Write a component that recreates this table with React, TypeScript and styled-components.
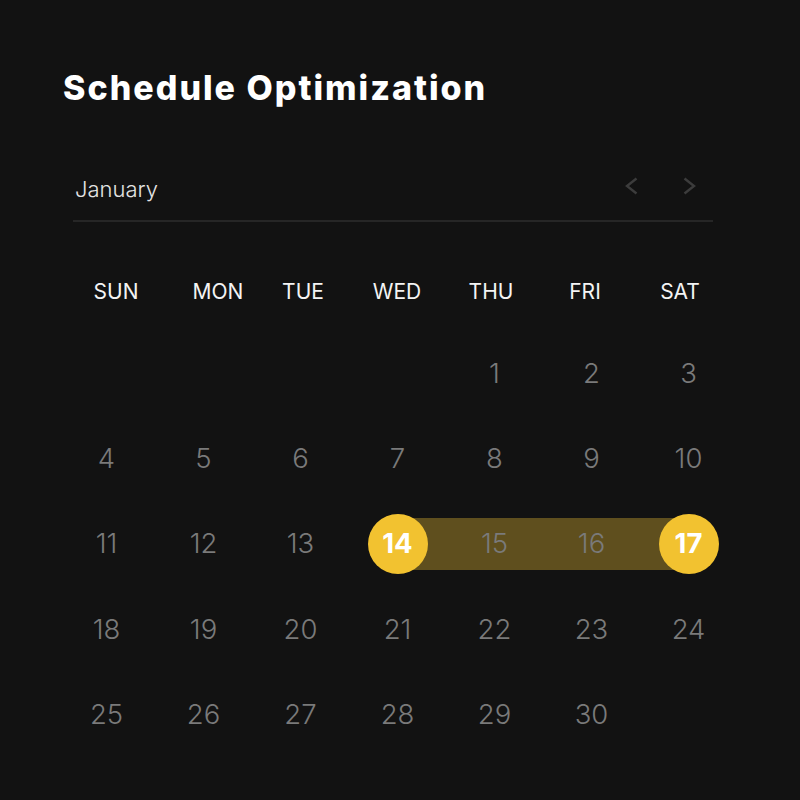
import React from "react";
import styled, { createGlobalStyle } from "styled-components";

const GlobalStyle = createGlobalStyle`
  html, body {
    margin: 0;
    padding: 0;
    background: #121212;
  }
  body {
    font-family: Inter, "Noto Sans", "Liberation Sans", sans-serif;
    width: 800px;
    height: 800px;
    overflow: hidden;
  }
`;

const YELLOW = "#f2c230";
const BAND = "#5f4f1e";

const Page = styled.main`
  width: 800px;
  height: 800px;
  box-sizing: border-box;
  background: #121212;
  padding: 70px 0 0 58px;
  display: flex;
  flex-direction: column;
`;

const Title = styled.h1`
  margin: 0 0 0 5px;
  font-size: 34px;
  line-height: 36px;
  font-weight: 800;
  color: #ffffff;
  letter-spacing: 2px;
`;

const MonthBar = styled.div`
  margin: 65px 0 0 15px;
  width: 640px;
  height: 51px;
  box-sizing: border-box;
  border-bottom: 2px solid #262626;
  display: flex;
  align-items: flex-start;
  justify-content: space-between;
  padding: 4px 17px 0 2px;
`;

const MonthName = styled.span`
  font-size: 22px;
  line-height: 28px;
  font-weight: 300;
  color: #e4e4e4;
`;

const NavGroup = styled.div`
  display: flex;
  gap: 45px;
  padding-top: 2px;
`;

const NavButton = styled.button`
  border: 0;
  background: transparent;
  padding: 0;
  width: 13px;
  height: 18px;
  display: flex;
  cursor: pointer;
  color: #3c3c3c;
`;

const WeekHeader = styled.div`
  margin: 56px 0 0 15px;
  display: grid;
  grid-template-columns: 86px 118px 52px 136px 52px 136px 54px;
`;

const WeekDay = styled.span`
  text-align: center;
  font-size: 21px;
  line-height: 28px;
  font-weight: 400;
  color: #f4f4f4;
`;

const DaysGrid = styled.div`
  margin-top: 25px;
  display: grid;
  grid-template-columns: repeat(7, 97px);
  grid-auto-rows: 85.3px;
`;

type RangePart = "none" | "start" | "middle" | "end";

const bandFor = (part: RangePart) => {
  if (part === "start")
    return `linear-gradient(to right, transparent 50%, ${BAND} 50%) center / 100% 52px no-repeat`;
  if (part === "end")
    return `linear-gradient(to right, ${BAND} 50%, transparent 50%) center / 100% 52px no-repeat`;
  if (part === "middle") return `linear-gradient(${BAND}, ${BAND}) center / 100% 52px no-repeat`;
  return "none";
};

const DayCell = styled.div<{ $part: RangePart }>`
  display: flex;
  align-items: center;
  justify-content: center;
  background: ${(p) => bandFor(p.$part)};
`;

const DayNumber = styled.span<{ $selected: boolean }>`
  width: 60px;
  height: 60px;
  border-radius: 50%;
  display: flex;
  align-items: center;
  justify-content: center;
  font-size: 27.5px;
  line-height: 1;
  font-weight: ${(p) => (p.$selected ? 700 : 300)};
  color: ${(p) => (p.$selected ? "#ffffff" : "#7a7a7a")};
  background: ${(p) => (p.$selected ? YELLOW : "transparent")};
`;

const Chevron = ({ dir }: { dir: "left" | "right" }) => (
  <svg width="13" height="18" viewBox="0 0 13 18" fill="none">
    <polyline
      points={dir === "left" ? "11.5,1.5 2,9 11.5,16.5" : "1.5,1.5 11,9 1.5,16.5"}
      stroke="currentColor"
      strokeWidth="2.4"
      strokeLinecap="butt"
      strokeLinejoin="miter"
    />
  </svg>
);

const WEEKDAYS = ["SUN", "MON", "TUE", "WED", "THU", "FRI", "SAT"];
const FIRST_OFFSET = 4;
const DAYS_IN_MONTH = 30;
const RANGE_START = 14;
const RANGE_END = 17;

const partOf = (d: number): RangePart => {
  if (d === RANGE_START) return "start";
  if (d === RANGE_END) return "end";
  if (d > RANGE_START && d < RANGE_END) return "middle";
  return "none";
};

export default function App() {
  const cells: (number | null)[] = [];
  for (let i = 0; i < FIRST_OFFSET; i++) cells.push(null);
  for (let d = 1; d <= DAYS_IN_MONTH; d++) cells.push(d);

  return (
    <>
      <GlobalStyle />
      <Page>
        <Title>Schedule Optimization</Title>
        <MonthBar>
          <MonthName>January</MonthName>
          <NavGroup>
            <NavButton aria-label="Previous month">
              <Chevron dir="left" />
            </NavButton>
            <NavButton aria-label="Next month">
              <Chevron dir="right" />
            </NavButton>
          </NavGroup>
        </MonthBar>
        <WeekHeader>
          {WEEKDAYS.map((w) => (
            <WeekDay key={w}>{w}</WeekDay>
          ))}
        </WeekHeader>
        <DaysGrid>
          {cells.map((d, i) => (
            <DayCell key={i} $part={d ? partOf(d) : "none"}>
              {d && (
                <DayNumber $selected={d === RANGE_START || d === RANGE_END}>{d}</DayNumber>
              )}
            </DayCell>
          ))}
        </DaysGrid>
      </Page>
    </>
  );
}
